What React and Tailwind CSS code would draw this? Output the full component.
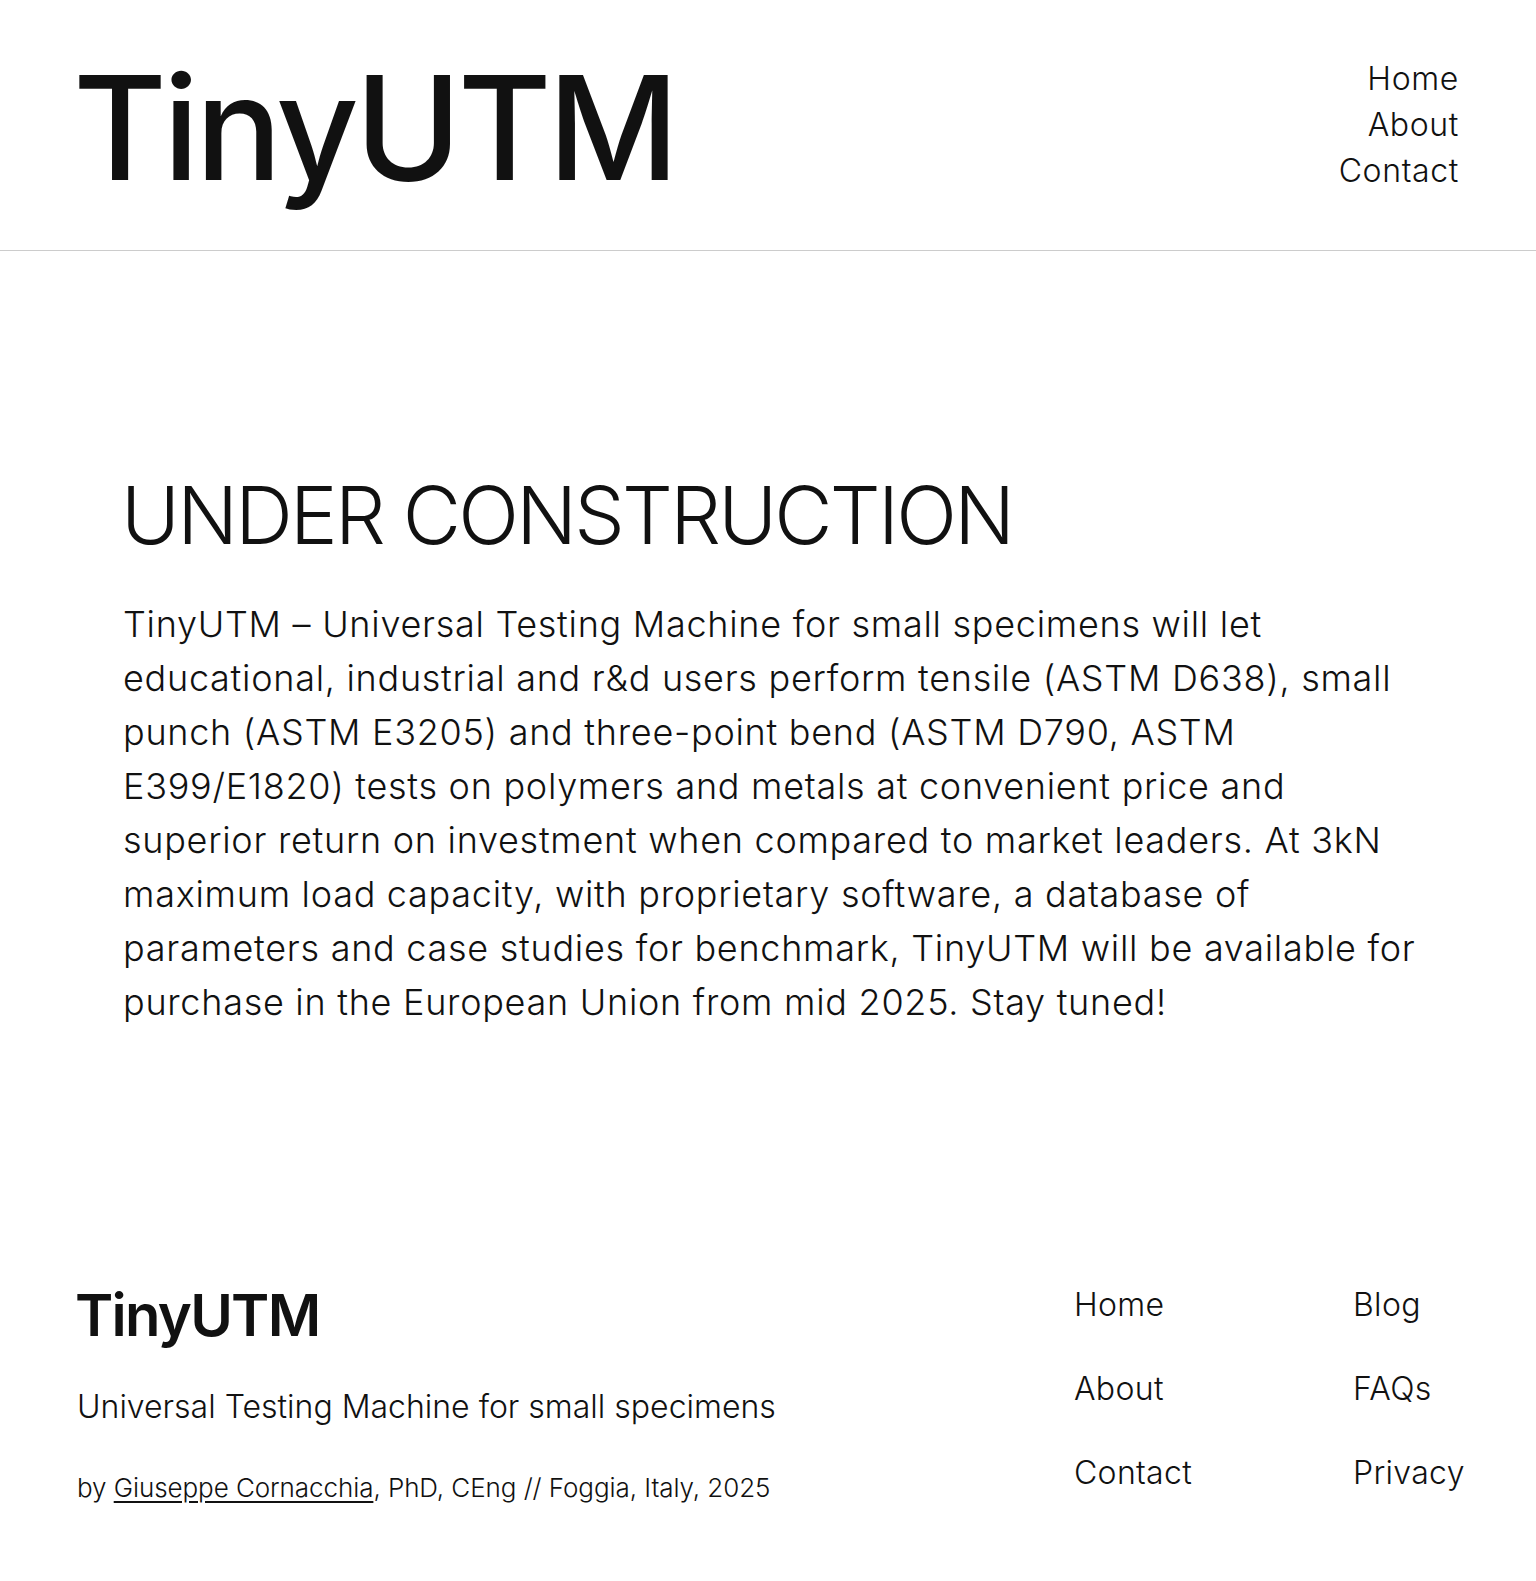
import React from "react";

const font = { fontFamily: "Inter, 'Noto Sans', sans-serif" };

const headerLinks = ["Home", "About", "Contact"];
const footerCols = [
  ["Home", "About", "Contact"],
  ["Blog", "FAQs", "Privacy"],
];

const intro = [
  "TinyUTM – Universal Testing Machine for small specimens will let",
  "educational, industrial and r&d users perform tensile (ASTM D638), small",
  "punch (ASTM E3205) and three-point bend (ASTM D790, ASTM",
  "E399/E1820) tests on polymers and metals at convenient price and",
  "superior return on investment when compared to market leaders. At 3kN",
  "maximum load capacity, with proprietary software, a database of",
  "parameters and case studies for benchmark, TinyUTM will be available for",
  "purchase in the European Union from mid 2025. Stay tuned!",
];

export default function App() {
  return (
    <div className="min-h-screen bg-white text-[#111111]" style={font}>
      {/* HEADER */}
      <header className="flex justify-between border-b border-[#cccccc] px-[77px] pt-[56px] pb-[50px]">
        <a href="#" className="-ml-[4px] text-[144px] leading-none font-medium tracking-[-0.027em]">
          TinyUTM
        </a>
        <nav className="flex flex-col items-end text-[32px] leading-[46px] font-light tracking-[0.02em]">
          {headerLinks.map((l) => (
            <a key={l} href="#">
              {l}
            </a>
          ))}
        </nav>
      </header>

      {/* MAIN */}
      <main className="px-[123px] pt-[224px] pb-[137px]">
        <h1 className="-ml-[2px] text-[80px] leading-none font-light tracking-[-0.034em]">UNDER CONSTRUCTION</h1>
        <p className="mt-[42px] whitespace-nowrap text-[36px] leading-[54px] font-light tracking-[0.02em]">
          {intro.map((line, i) => (
            <React.Fragment key={i}>
              {line}
              {i < intro.length - 1 && <br />}
            </React.Fragment>
          ))}
        </p>
      </main>

      {/* FOOTER */}
      <footer className="flex justify-between px-[77px] pt-[120px] pb-[75px]">
        <div>
          <div className="-ml-[2px] text-[58px] leading-none font-semibold tracking-[-0.03em]">TinyUTM</div>
          <p className="mt-[40px] text-[32px] leading-[46px] font-light">
            Universal Testing Machine for small specimens
          </p>
          <p className="mt-[38px] text-[26px] leading-[39px] font-light tracking-[-0.003em]">
            by{" "}
            <a href="#" className="underline underline-offset-4">
              Giuseppe Cornacchia
            </a>
            , PhD, CEng // Foggia, Italy, 2025
          </p>
        </div>
        <div className="-mt-[4px] flex text-[32px] leading-[46px] font-light tracking-[0.01em]">
          {footerCols.map((col, i) => (
            <ul key={i} className={`flex flex-col gap-[38px] ${i === 0 ? "w-[279px]" : "w-[106px]"}`}>
              {col.map((l) => (
                <li key={l}>
                  <a href="#">{l}</a>
                </li>
              ))}
            </ul>
          ))}
        </div>
      </footer>
    </div>
  );
}
